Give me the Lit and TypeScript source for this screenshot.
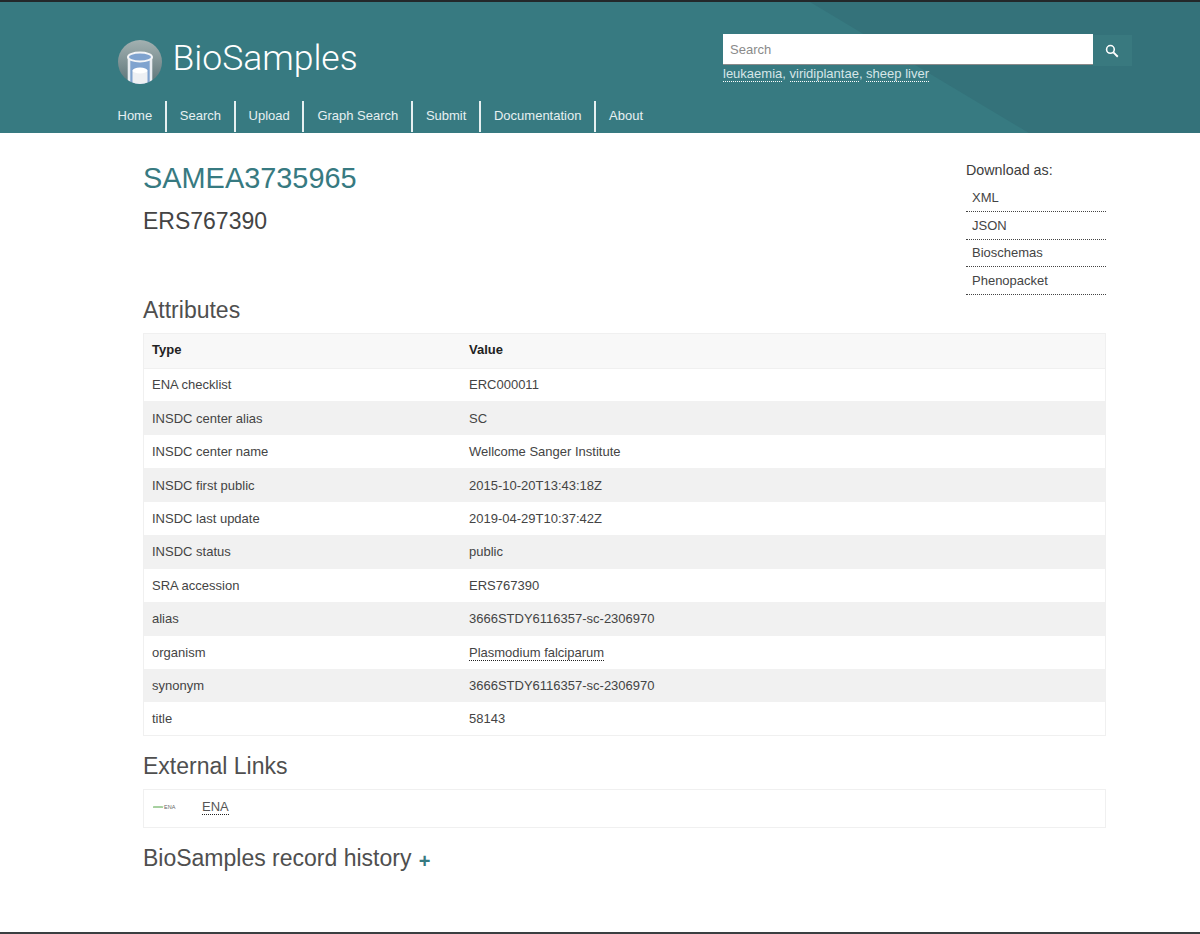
import { LitElement, css, html } from "lit";
import { customElement } from "lit/decorators.js";

const NAV = ["Home", "Search", "Upload", "Graph Search", "Submit", "Documentation", "About"];
const DOWNLOADS = ["XML", "JSON", "Bioschemas", "Phenopacket"];
const ATTRS: [string, string][] = [
  ["ENA checklist", "ERC000011"],
  ["INSDC center alias", "SC"],
  ["INSDC center name", "Wellcome Sanger Institute"],
  ["INSDC first public", "2015-10-20T13:43:18Z"],
  ["INSDC last update", "2019-04-29T10:37:42Z"],
  ["INSDC status", "public"],
  ["SRA accession", "ERS767390"],
  ["alias", "3666STDY6116357-sc-2306970"],
  ["organism", "Plasmodium falciparum"],
  ["synonym", "3666STDY6116357-sc-2306970"],
  ["title", "58143"],
];

@customElement("app-root")
export class AppRoot extends LitElement {
  renderLogo() {
    return html`
      <svg class="logo" viewBox="0 0 44 44" width="44" height="44">
        <defs>
          <linearGradient id="disc" x1="0" y1="0" x2="0" y2="1">
            <stop offset="0" stop-color="#a3b1b1" />
            <stop offset="1" stop-color="#5c7478" />
          </linearGradient>
          <clipPath id="round"><circle cx="22" cy="22" r="22" /></clipPath>
        </defs>
        <circle cx="22" cy="22" r="22" fill="url(#disc)" />
        <g clip-path="url(#round)">
          <path d="M11 17h22v28H11z" fill="#7fa3cf" />
          <path d="M14.500 31h15v14h-15z" fill="#eef0f3" />
          <ellipse cx="22" cy="30.500" rx="7.500" ry="3" fill="#fff" />
          <path d="M11 17v28M33 17v28" stroke="#e9eef2" stroke-width="2.600" />
          <ellipse cx="22" cy="17" rx="12" ry="4.500" fill="#7fa3cf" stroke="#f3f5f7" stroke-width="2" />
        </g>
      </svg>
    `;
  }

  render() {
    return html`
      <header class="masthead">
        <div class="shade"></div>
        <div class="top">
          <div class="brand">
            ${this.renderLogo()}
            <span class="brand-name">BioSamples</span>
          </div>
          <div class="search-col">
            <div class="search">
              <input type="text" placeholder="Search" />
              <button aria-label="Search">
                <svg viewBox="0 0 16 16" width="14" height="14">
                  <circle cx="6.200" cy="6.200" r="4.400" fill="none" stroke="#fff" stroke-width="1.800" />
                  <path d="M9.600 9.600l5 5" stroke="#fff" stroke-width="2.200" />
                </svg>
              </button>
            </div>
            <div class="examples">
              <a>leukaemia</a>, <a>viridiplantae</a>, <a>sheep liver</a>
            </div>
          </div>
        </div>
        <nav>${NAV.map((n) => html`<a>${n}</a>`)}</nav>
      </header>

      <main>
        <div class="intro">
          <div>
            <h1>SAMEA3735965</h1>
            <h2 class="name">ERS767390</h2>
          </div>
          <div class="downloads">
            <div class="dl-title">Download as:</div>
            ${DOWNLOADS.map((d) => html`<a>${d}</a>`)}
          </div>
        </div>

        <h3 class="attr-title">Attributes</h3>
        <table>
          <thead>
            <tr><th class="key">Type</th><th>Value</th></tr>
          </thead>
          <tbody>
            ${ATTRS.map(
              ([k, v]) => html`
                <tr>
                  <td class="key">${k}</td>
                  <td>${k === "organism" ? html`<a class="dotted">${v}</a>` : v}</td>
                </tr>
              `
            )}
          </tbody>
        </table>

        <h3 class="links-title">External Links</h3>
        <div class="link-box">
          <span class="ena-logo">
            <svg viewBox="0 0 11 4" width="11" height="4">
              <path d="M0 1l1 2 1-2 1 2 1-2 1 2 1-2 1 2 1-2 1 2 1-2" fill="none" stroke="#5aa84e" stroke-width=".6" />
            </svg>
            <span>ENA</span>
          </span>
          <a class="dotted">ENA</a>
        </div>

        <h3 class="history-title">BioSamples record history <span class="plus">+</span></h3>
      </main>
      <div class="foot"></div>
    `;
  }

  static styles = css`
    :host {
      display: block;
      height: 934px;
      position: relative;
      overflow: hidden;
      background: #fff;
      font-family: "Liberation Sans", Arial, sans-serif;
      color: #333;
    }

    .masthead {
      position: relative;
      height: 133px;
      box-sizing: border-box;
      border-top: 2px solid #23282a;
      background: #377a81;
      overflow: hidden;
      display: flex;
      flex-direction: column;
    }

    .shade {
      position: absolute;
      inset: 0;
      background: #34727a;
      clip-path: polygon(810px 0, 1200px 0, 1200px 131px, 1029px 131px);
    }

    .top {
      position: relative;
      display: flex;
      justify-content: space-between;
      padding: 32px 68px 0 118px;
      height: 99px;
      box-sizing: border-box;
    }

    .brand {
      display: flex;
      align-items: flex-start;
      gap: 10.500px;
      padding-top: 6px;
    }

    .logo {
      display: block;
    }

    .brand-name {
      color: #fff;
      font-family: Roboto, "Liberation Sans", sans-serif;
      font-weight: 300;
      font-size: 35.500px;
      line-height: 36px;
    }

    .search-col {
      width: 409px;
    }

    .search {
      display: flex;
      height: 32px;
    }

    .search input {
      width: 370px;
      height: 31px;
      box-sizing: border-box;
      border: 0;
      border-bottom: 1px solid #8a8a8a;
      padding: 0 7px;
      margin: 0;
      font: 13px "Liberation Sans", Arial, sans-serif;
      background: #fff;
      border-radius: 0;
      outline: none;
    }

    .search input::placeholder {
      color: #8a8a8a;
      opacity: 1;
    }

    .search button {
      width: 39px;
      height: 31px;
      margin-top: 1px;
      border: 0;
      padding: 0 1px 0 0;
      background: #39797f;
      display: flex;
      align-items: center;
      justify-content: center;
    }

    .examples {
      color: #d6e6e8;
      font-size: 13px;
      line-height: 16px;
    }

    .examples a {
      border-bottom: 1px dotted #fff;
    }

    nav {
      position: relative;
      display: flex;
      padding-left: 104.500px;
      height: 31px;
    }

    nav a {
      color: #e6f0f1;
      font-size: 13px;
      line-height: 30px;
      padding: 0 12.600px 0 13px;
      border-right: 2px solid #e6f0f1;
    }

    nav a:last-child {
      border-right: 0;
    }

    main {
      padding: 0 94px 0 143px;
    }

    .intro {
      display: flex;
      justify-content: space-between;
      height: 162px;
      padding-top: 25px;
      box-sizing: border-box;
    }

    h1 {
      margin: 0;
      color: #377a81;
      font-size: 28.900px;
      font-weight: 400;
      line-height: 40px;
    }

    .name {
      margin: 5px 0 0;
      font-size: 23px;
      font-weight: 400;
      line-height: 36px;
      color: #444;
    }

    .downloads {
      width: 140px;
      display: flex;
      flex-direction: column;
    }

    .dl-title {
      font-size: 14.300px;
      line-height: 24px;
      height: 27.500px;
      color: #3c3c3c;
    }

    .downloads a {
      font-size: 13px;
      line-height: 26px;
      height: 26px;
      padding: 0 0 0 6px;
      margin-bottom: 0.500px;
      border-bottom: 1px dotted #444;
      color: #444;
    }

    h3 {
      margin: 0;
      font-weight: 400;
      font-size: 23px;
      color: #4f4f4f;
      line-height: 30px;
    }

    .attr-title {
      margin-bottom: 8px;
    }

    table {
      width: 100%;
      border-collapse: collapse;
      border: 1px solid #f0f0f0;
      font-size: 13px;
      table-layout: fixed;
    }

    th,
    td {
      text-align: left;
      padding: 0 9px;
      height: 33.450px;
      box-sizing: border-box;
      color: #444;
    }

    th {
      height: 34.500px;
      padding-bottom: 2px;
      font-weight: 700;
      color: #222;
      background: #f8f8f8;
      border-bottom: 1px solid #f0f0f0;
    }

    th.key,
    td.key {
      width: 316.500px;
      padding-left: 8px;
    }

    tbody tr:nth-child(even) {
      background: #f1f1f1;
    }

    .dotted {
      border-bottom: 1px dotted #222;
    }

    .links-title {
      margin-top: 14.500px;
    }

    .link-box {
      margin-top: 8px;
      height: 39px;
      box-sizing: border-box;
      border: 1px solid #f0f0f0;
      display: flex;
      align-items: center;
      font-size: 13px;
      padding: 0 0 3px 9px;
      color: #555;
    }

    .ena-logo {
      width: 49px;
      display: flex;
      align-items: center;
      font-size: 5.500px;
      color: #666;
    }

    .history-title {
      margin-top: 15px;
    }

    .plus {
      color: #377a81;
      font-weight: 700;
      font-size: 20px;
      margin-left: 1px;
      vertical-align: -2px;
    }

    .foot {
      position: absolute;
      left: 0;
      right: 0;
      bottom: 0;
      height: 2px;
      background: #3a3f41;
    }
  `;
}

declare global {
  interface HTMLElementTagNameMap {
    "app-root": AppRoot;
  }
}
